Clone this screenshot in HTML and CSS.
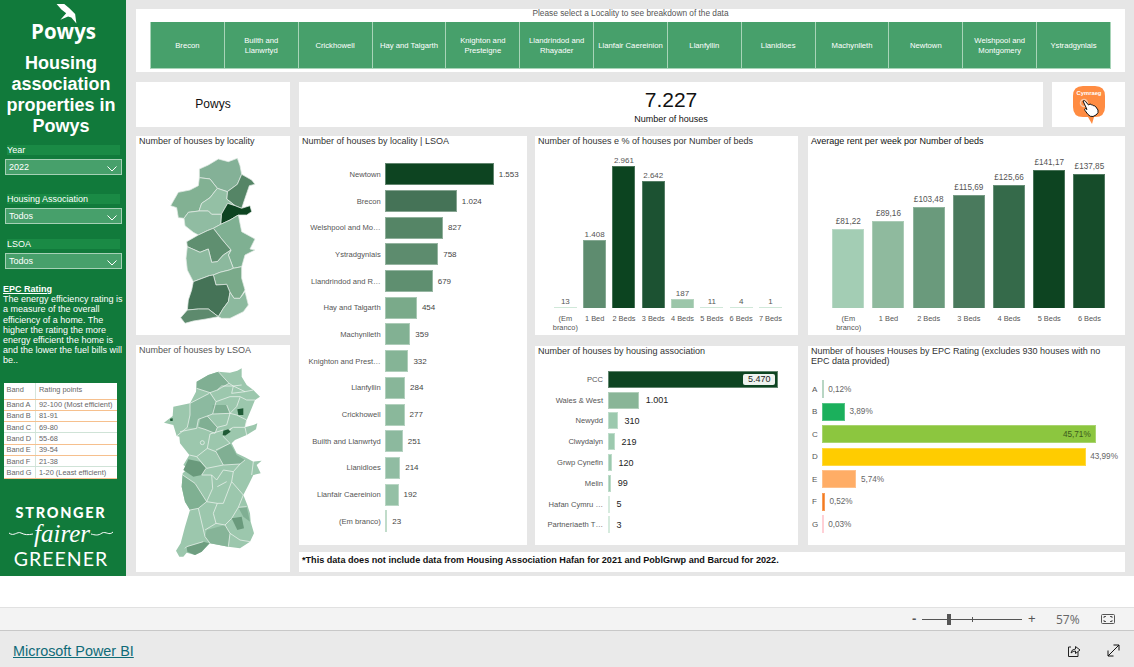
FILE: index.html
```html
<!DOCTYPE html>
<html lang="en">
<head>
<meta charset="utf-8">
<title>Housing association properties in Powys</title>
<link rel="stylesheet" href="styles.css">
</head>
<body>
<div class="report">
  <aside class="sidebar">
    <div class="logo">
      <svg class="bird" viewBox="155 8 72 68" width="23" height="22"><path fill="#fff" d="M160 11 L184 11 L200 24 L218 42 L222 72 L206 53 L196 50 L172 60 L190 40 L175 28 Z"/></svg>
      <div class="logo-text">Powys</div>
    </div>
    <h1 class="heading">Housing association properties in Powys</h1>
    <div class="slicer slicer-year">
      <div class="slicer-label">Year</div>
      <div class="dropdown"><span>2022</span><svg width="10" height="6" viewBox="0 0 10 6"><polyline points="0.5,0.5 5,5 9.5,0.5" fill="none" stroke="#fff"/></svg></div>
    </div>
    <div class="slicer slicer-ha">
      <div class="slicer-label">Housing Association</div>
      <div class="dropdown"><span>Todos</span><svg width="10" height="6" viewBox="0 0 10 6"><polyline points="0.5,0.5 5,5 9.5,0.5" fill="none" stroke="#fff"/></svg></div>
    </div>
    <div class="slicer slicer-lsoa">
      <div class="slicer-label">LSOA</div>
      <div class="dropdown"><span>Todos</span><svg width="10" height="6" viewBox="0 0 10 6"><polyline points="0.5,0.5 5,5 9.5,0.5" fill="none" stroke="#fff"/></svg></div>
    </div>
    <div class="epc-text">
      <div class="epc-title">EPC Rating</div>
      <p>The energy efficiency rating is a measure of the overall efficiency of a home. The higher the rating the more energy efficient the home is and the lower the fuel bills will be..</p>
    </div>
    <table class="bands">
      <tr class="band-head"><td>Band</td><td>Rating points</td></tr>
      <tr class="o"><td>Band A</td><td>92-100 (Most efficient)</td></tr>
      <tr class="o"><td>Band B</td><td>81-91</td></tr>
      <tr class="g"><td>Band C</td><td>69-80</td></tr>
      <tr class="o"><td>Band D</td><td>55-68</td></tr>
      <tr class="o"><td>Band E</td><td>39-54</td></tr>
      <tr class="g"><td>Band F</td><td>21-38</td></tr>
      <tr class="o"><td>Band G</td><td>1-20 (Least efficient)</td></tr>
    </table>
    <div class="slogan">
      <div class="stronger">STRONGER</div>
      <div class="fairer">
        <svg width="24" height="8" viewBox="0 0 24 8"><path d="M0 3 C5 7 8 1 12 3 C16 5 19 5 24 4" fill="none" stroke="#fff" stroke-width="1"/></svg>
        <span>fairer</span>
        <svg width="22" height="8" viewBox="0 0 22 8"><path d="M0 4 C4 5 7 6 11 3 C15 1 18 6 22 2" fill="none" stroke="#fff" stroke-width="1"/></svg>
      </div>
      <div class="greener">GREENER</div>
    </div>
  </aside>

  <main class="main">
    <section class="tile top-tile">
      <div class="top-caption">Please select a Locality to see breakdown of the data</div>
      <div class="locality-buttons">
        <button class="loc">Brecon</button>
        <button class="loc">Builth and Llanwrtyd</button>
        <button class="loc">Crickhowell</button>
        <button class="loc">Hay and Talgarth</button>
        <button class="loc">Knighton and Presteigne</button>
        <button class="loc">Llandrindod and Rhayader</button>
        <button class="loc">Llanfair Caereinion</button>
        <button class="loc">Llanfyllin</button>
        <button class="loc">Llanidloes</button>
        <button class="loc">Machynlleth</button>
        <button class="loc">Newtown</button>
        <button class="loc">Welshpool and Montgomery</button>
        <button class="loc">Ystradgynlais</button>
      </div>
    </section>

    <section class="kpi-row">
      <div class="tile place">Powys</div>
      <div class="tile kpi">
        <div class="kpi-value">7.227</div>
        <div class="kpi-label">Number of houses</div>
      </div>
      <div class="tile lang">
        <svg width="34" height="40" viewBox="0 0 34 40">
          <path fill="#ff8c42" d="M11 0 H23 Q33 0 33 10 V21 Q33 31 23 31 H22 L20 38 L16 31 H11 Q1 31 1 21 V10 Q1 0 11 0 Z"/>
          <text x="17" y="9" class="lang-text" text-anchor="middle">Cymraeg</text>
          <circle cx="12" cy="17" r="3.5" fill="none" stroke="#f6c9a8" stroke-width="1.5"/>
          <path transform="translate(-3,-1)" fill="#fff" stroke="#111" stroke-width="1" d="M14 16 Q15.5 15 16.5 16.5 L19.5 20 L21 19 Q22 19 22.5 20 Q24 19.5 24.5 20.8 Q26 20.5 26.8 21.8 L29 25 Q30 28 27 30 L24 31.5 Q21 32 19 29.5 L16 25.5 Q15 24 16.5 23.5 L18 24.5 Z"/>
        </svg>
      </div>
    </section>

    <section class="lower">
      <div class="maps">
        <div class="tile map-a">
          <div class="title">Number of houses by locality</div>
          <svg class="map" width="154" height="187" viewBox="18 39 462 561">
            <g stroke="#e2ebe5" stroke-width="2.2" stroke-linejoin="round">
              <polygon fill="#84b197" points="208,102 235,90 265,72 295,80 322,70 330,92 335,118 322,148 292,170 262,160 240,132 208,128"/>
              <polygon fill="#82b193" points="208,128 240,132 262,160 240,188 215,205 207,228 175,232 162,250 145,248 140,218 122,212 145,172 180,165 205,152"/>
              <polygon fill="#558566" points="335,118 365,135 375,148 358,152 345,190 335,220 315,212 290,192 292,170 322,148"/>
              <polygon fill="#94c0a5" points="262,160 292,170 290,192 315,212 293,205 274,238 245,238 235,228 207,228 215,205 240,188"/>
              <polygon fill="#0d4421" points="293,205 315,212 335,220 360,212 365,230 350,240 325,240 300,255 272,268 274,238"/>
              <polygon fill="#90bca2" points="175,232 207,228 235,228 245,238 274,238 272,268 250,280 232,287 205,300 190,292 165,272 162,250"/>
              <polygon fill="#7fb092" points="272,268 300,255 325,240 335,290 375,312 360,342 375,345 345,360 335,395 310,400 295,360 303,345 275,312 250,280"/>
              <polygon fill="#5f8f70" points="205,300 232,287 250,280 275,312 303,345 280,360 262,380 245,382 235,342 210,352 172,335 170,320"/>
              <polygon fill="#8cb99e" points="172,335 210,352 235,342 245,382 262,380 280,360 303,345 295,360 310,400 298,405 270,412 250,420 238,422 190,440 172,405 168,370"/>
              <polygon fill="#7aaa8a" points="298,405 310,400 335,395 335,430 345,465 330,490 312,490 300,472 290,448 258,450 250,420 270,412"/>
              <polygon fill="#457357" points="238,422 250,420 258,450 290,448 300,472 295,500 280,520 265,545 235,522 205,522 172,525 175,495 185,465 190,440"/>
              <polygon fill="#8cb99e" points="300,472 312,490 330,490 345,470 355,510 340,530 300,550 275,550 265,545 280,520 295,500"/>
              <polygon fill="#5d8a6d" points="172,525 205,522 235,522 265,545 228,552 190,558 165,565 152,548"/>
            </g>
          </svg>
        </div>
        <div class="tile map-b">
          <div class="title title-muted">Number of houses by LSOA</div>
          <svg class="map" width="154" height="215" viewBox="18 51 462 645">
            <polygon fill="#9cc7ad" points="265,95 300,98 322,92 335,85 335,110 350,135 370,150 390,170 375,180 365,205 350,240 345,262 370,255 382,250 378,268 350,285 315,300 305,310 320,340 345,352 370,365 395,362 380,375 392,400 370,405 358,430 340,465 352,495 360,520 362,545 372,580 360,605 330,625 295,620 240,610 215,635 195,645 170,638 160,650 148,650 138,632 152,610 165,560 180,510 165,485 155,440 158,400 175,385 160,375 178,345 150,310 148,290 140,288 130,255 102,248 128,228 130,200 180,190 198,155 200,125 235,105"/>
            <polygon fill="#80af93" points="200,125 235,105 265,95 297,130 262,150 240,158 200,145"/>
            <polygon fill="#8cbaa0" points="180,190 238,160 258,185 248,222 205,238 200,265 172,262 180,225"/>
            <polygon fill="#80af93" points="205,262 212,235 232,228 262,262 255,280 225,268"/>
            <polygon fill="#80af93" points="248,195 290,195 300,220 248,222"/>
            <polygon fill="#80af93" points="258,335 300,310 320,345 345,360 330,372 280,375 262,345"/>
            <polygon fill="#6a9a7c" points="175,358 210,365 228,385 215,405 190,410 160,390"/>
            <polygon fill="#7fb092" points="158,405 195,430 230,485 205,505 180,510 165,485 155,440"/>
            <polygon fill="#86b498" points="230,570 285,555 300,580 295,620 240,610 225,590"/>
            <polygon fill="#6e9e80" points="170,620 220,605 238,610 215,635 195,645 172,635"/>
            <polygon fill="#6a9a7c" points="305,535 335,530 342,565 322,570"/>
            <polygon fill="#80af93" points="325,502 350,500 360,545 340,530"/>
            <g fill="none" stroke="#eef4f0" stroke-width="2.2" stroke-linejoin="round">
              <polyline points="200,145 240,158 262,150 297,130 265,95"/>
              <polyline points="262,150 275,138 310,138 345,155 370,150"/>
              <polyline points="297,130 310,138 335,135"/>
              <polyline points="310,138 305,160 345,155"/>
              <polyline points="240,158 258,185 300,170 330,170 350,180 375,180"/>
              <polyline points="180,190 180,225 172,262 140,288"/>
              <polyline points="238,160 180,190"/>
              <polyline points="258,185 248,222 205,238 200,265 150,275"/>
              <polyline points="248,222 300,220 320,200 330,172"/>
              <polyline points="232,228 262,262 255,280 225,268 205,262"/>
              <polyline points="290,195 300,220 290,255 262,262"/>
              <polyline points="300,220 320,225 350,240 345,262 310,262 295,270"/>
              <polyline points="240,282 232,325 200,350 178,345"/>
              <polyline points="240,282 280,270"/>
              <polyline points="258,330 300,310 280,290 305,265"/>
              <polyline points="232,325 258,335 280,375 330,372 345,360"/>
              <polyline points="200,350 230,385 280,375"/>
              <polyline points="228,385 215,405 245,405 260,420 280,390 310,395 330,372"/>
              <polyline points="310,395 305,425 340,465"/>
              <polyline points="158,405 195,430 230,485 205,505 180,510"/>
              <polyline points="245,405 248,445 230,485 262,490 280,490 305,425"/>
              <polyline points="262,440 290,425"/>
              <polyline points="205,505 225,590 240,610"/>
              <polyline points="262,490 250,520 258,550 285,555 305,535 325,502 340,465"/>
              <polyline points="225,570 258,550"/>
              <polyline points="285,555 300,580 295,620"/>
              <polyline points="300,580 330,600 360,605"/>
              <polyline points="350,500 325,502"/>
              <polyline points="165,625 170,620 220,605"/>
              <polyline points="345,262 350,285"/>
              <polyline points="370,365 365,405"/>
              <circle cx="217" cy="308" r="6"/>
            </g>
            <polygon fill="#1f5a36" points="322,208 340,205 340,225 325,225"/>
            <polygon fill="#1f5a36" points="280,272 295,268 302,275 285,287 278,285"/>
            <polygon fill="#1f5a36" points="120,236 128,235 128,243 121,243"/>
          </svg>
        </div>
      </div>

      <div class="right">
        <div class="charts">
          <div class="tile locality">
            <div class="title">Number of houses by locality | LSOA</div>
            <div class="hchart">
              <div class="hrow"><span class="hlabel">Newtown</span><span class="hbar" style="width:108.5px;background:#0d4421"></span><span class="hval">1.553</span></div>
              <div class="hrow"><span class="hlabel">Brecon</span><span class="hbar" style="width:71.6px;background:#457357"></span><span class="hval">1.024</span></div>
              <div class="hrow"><span class="hlabel">Welshpool and Mo…</span><span class="hbar" style="width:57.8px;background:#558566"></span><span class="hval">827</span></div>
              <div class="hrow"><span class="hlabel">Ystradgynlais</span><span class="hbar" style="width:53px;background:#5d8c6e"></span><span class="hval">758</span></div>
              <div class="hrow"><span class="hlabel">Llandrindod and R…</span><span class="hbar" style="width:47.5px;background:#5f8f70"></span><span class="hval">679</span></div>
              <div class="hrow"><span class="hlabel">Hay and Talgarth</span><span class="hbar" style="width:31.7px;background:#7aaa8a"></span><span class="hval">454</span></div>
              <div class="hrow"><span class="hlabel">Machynlleth</span><span class="hbar" style="width:25.1px;background:#82b193"></span><span class="hval">359</span></div>
              <div class="hrow"><span class="hlabel">Knighton and Prest…</span><span class="hbar" style="width:23.2px;background:#85b496"></span><span class="hval">332</span></div>
              <div class="hrow"><span class="hlabel">Llanfyllin</span><span class="hbar" style="width:19.9px;background:#88b699"></span><span class="hval">284</span></div>
              <div class="hrow"><span class="hlabel">Crickhowell</span><span class="hbar" style="width:19.4px;background:#8ab89b"></span><span class="hval">277</span></div>
              <div class="hrow"><span class="hlabel">Builth and Llanwrtyd</span><span class="hbar" style="width:17.5px;background:#8cb99e"></span><span class="hval">251</span></div>
              <div class="hrow"><span class="hlabel">Llanidloes</span><span class="hbar" style="width:15px;background:#90bca2"></span><span class="hval">214</span></div>
              <div class="hrow"><span class="hlabel">Llanfair Caereinion</span><span class="hbar" style="width:13.4px;background:#94c0a5"></span><span class="hval">192</span></div>
              <div class="hrow"><span class="hlabel">(Em branco)</span><span class="hbar" style="width:1.6px;background:#a0c9ae"></span><span class="hval">23</span></div>
            </div>
          </div>

          <div class="stack stack-mid">
            <div class="tile chart-tile">
              <div class="title">Number of houses e % of houses por Number of beds</div>
              <div class="vplot beds">
                <div class="vcol"><span class="vval">13</span><span class="vbar" style="height:1px;background:#c0e0cc"></span></div>
                <div class="vcol"><span class="vval">1.408</span><span class="vbar" style="height:68px;background:#5e8c6f"></span></div>
                <div class="vcol"><span class="vval">2.961</span><span class="vbar" style="height:142px;background:#0c4420"></span></div>
                <div class="vcol"><span class="vval">2.642</span><span class="vbar" style="height:127px;background:#1c5232"></span></div>
                <div class="vcol"><span class="vval">187</span><span class="vbar" style="height:9px;background:#9cc6aa"></span></div>
                <div class="vcol"><span class="vval">11</span><span class="vbar" style="height:1px;background:#c0e0cc"></span></div>
                <div class="vcol"><span class="vval">4</span><span class="vbar" style="height:1px;background:#c0e0cc"></span></div>
                <div class="vcol"><span class="vval">1</span><span class="vbar" style="height:1px;background:#c0e0cc"></span></div>
              </div>
              <div class="vcats beds">
                <span>(Em branco)</span><span>1 Bed</span><span>2 Beds</span><span>3 Beds</span><span>4 Beds</span><span>5 Beds</span><span>6 Beds</span><span>7 Beds</span>
              </div>
            </div>
            <div class="tile chart-tile">
              <div class="title">Number of houses by housing association</div>
              <div class="hchart ha">
                <div class="hrow"><span class="hlabel">PCC</span><span class="hbar" style="width:170.7px;background:#0d4421"><span class="pill">5.470</span></span></div>
                <div class="hrow"><span class="hlabel">Wales &amp; West</span><span class="hbar" style="width:31.3px;background:#89b597"></span><span class="hval">1.001</span></div>
                <div class="hrow"><span class="hlabel">Newydd</span><span class="hbar" style="width:10px;background:#9cc9ae"></span><span class="hval">310</span></div>
                <div class="hrow"><span class="hlabel">Clwydalyn</span><span class="hbar" style="width:7px;background:#9cc9ae"></span><span class="hval">219</span></div>
                <div class="hrow"><span class="hlabel">Grwp Cynefin</span><span class="hbar" style="width:4px;background:#9cc9ae"></span><span class="hval">120</span></div>
                <div class="hrow"><span class="hlabel">Melin</span><span class="hbar" style="width:3.2px;background:#9cc9ae"></span><span class="hval">99</span></div>
                <div class="hrow"><span class="hlabel">Hafan Cymru …</span><span class="hbar" style="width:1px;background:#c0e0cc"></span><span class="hval">5</span></div>
                <div class="hrow"><span class="hlabel">Partneriaeth T…</span><span class="hbar" style="width:1px;background:#c0e0cc"></span><span class="hval">3</span></div>
              </div>
            </div>
          </div>

          <div class="stack stack-right">
            <div class="tile chart-tile">
              <div class="title title-dark">Average rent per week por Number of beds</div>
              <div class="vplot rent">
                <div class="vcol"><span class="vval">£81,22</span><span class="vbar" style="height:79px;background:#a3cdb4"></span></div>
                <div class="vcol"><span class="vval">£89,16</span><span class="vbar" style="height:87px;background:#8fba9e"></span></div>
                <div class="vcol"><span class="vval">£103,48</span><span class="vbar" style="height:101px;background:#6a9a7c"></span></div>
                <div class="vcol"><span class="vval">£115,69</span><span class="vbar" style="height:113px;background:#4a7a5d"></span></div>
                <div class="vcol"><span class="vval">£125,66</span><span class="vbar" style="height:123px;background:#356a4a"></span></div>
                <div class="vcol"><span class="vval">£141,17</span><span class="vbar" style="height:138px;background:#0d4421"></span></div>
                <div class="vcol"><span class="vval">£137,85</span><span class="vbar" style="height:134px;background:#164c2a"></span></div>
              </div>
              <div class="vcats rent">
                <span>(Em branco)</span><span>1 Bed</span><span>2 Beds</span><span>3 Beds</span><span>4 Beds</span><span>5 Beds</span><span>6 Beds</span>
              </div>
            </div>
            <div class="tile chart-tile">
              <div class="title title-two">Number of houses Houses by EPC Rating (excludes 930 houses with no EPC data provided)</div>
              <div class="epc">
                <div class="erow"><span class="elabel">A</span><span class="ebar" style="width:1px;background:#a0c9b0"></span><span class="eval">0,12%</span></div>
                <div class="erow"><span class="elabel">B</span><span class="ebar" style="width:23.3px;background:#1bb05c"></span><span class="eval">3,89%</span></div>
                <div class="erow"><span class="elabel">C</span><span class="ebar" style="width:274px;background:#8cc63f"><span class="eval-in">45,71%</span></span></div>
                <div class="erow"><span class="elabel">D</span><span class="ebar" style="width:264px;background:#ffcc00"></span><span class="eval">43,99%</span></div>
                <div class="erow"><span class="elabel">E</span><span class="ebar" style="width:34.7px;background:#ffad66"></span><span class="eval">5,74%</span></div>
                <div class="erow"><span class="elabel">F</span><span class="ebar" style="width:3.2px;background:#f47b20"></span><span class="eval">0,52%</span></div>
                <div class="erow"><span class="elabel">G</span><span class="ebar" style="width:1px;background:#ffc0c8"></span><span class="eval">0,03%</span></div>
              </div>
            </div>
          </div>
        </div>
        <div class="tile footnote">*This data does not include data from Housing Association Hafan for 2021 and PoblGrwp and Barcud for 2022.</div>
      </div>
    </section>
  </main>
</div>

<div class="gap-strip"></div>

<div class="zoombar">
  <span class="zoom-minus">-</span>
  <div class="slider"><span class="slider-thumb"></span><span class="slider-tick"></span></div>
  <span class="zoom-plus">+</span>
  <span class="zoom-pct">57%</span>
  <svg class="fit" width="14" height="10" viewBox="0 0 14 10"><rect x="0.5" y="0.5" width="13" height="9" rx="1" fill="none" stroke="#555"/><path d="M3 4 V2.5 H5 M9 2.5 H11 V4 M11 6 V7.5 H9 M5 7.5 H3 V6" fill="none" stroke="#555"/></svg>
</div>

<footer class="footer">
  <a class="brand" href="#">Microsoft Power BI</a>
  <div class="footer-icons">
    <svg width="14" height="14" viewBox="0 0 14 14"><path d="M4 3 H1.5 V12.5 H11 V8" fill="none" stroke="#222"/><path d="M4 9 Q4.5 5 8.5 5 V2.5 L13 6 L8.5 9.5 V7 Q6 7 4 9 Z" fill="none" stroke="#222"/></svg>
    <svg width="13" height="13" viewBox="0 0 13 13"><path d="M1 12 L12 1 M6.5 1 H12 V6.5 M1 6.5 V12 H6.5" fill="none" stroke="#111"/></svg>
  </div>
</footer>
</body>
</html>
```
FILE: styles.css
```css
* { box-sizing: border-box; }
html, body { margin: 0; padding: 0; }
body {
  width: 1134px;
  height: 667px;
  overflow: hidden;
  background: #fff;
  font-family: "Liberation Sans", Arial, sans-serif;
  color: #333;
}
.report { display: flex; height: 576px; background: #e6e6e6; }

/* Sidebar */
.sidebar { width: 126px; flex: none; background: #117a3b; color: #fff; display: flex; flex-direction: column; }
.logo { display: flex; flex-direction: column; align-items: center; padding-top: 3px; height: 42px; }
.bird { display: block; margin-left: 6px; flex: none; }
.logo-text { font-family: "Open Sans", sans-serif; font-weight: 700; font-size: 20.5px; line-height: 19px; margin-left: 1px; margin-top: -3px; }
.heading { margin: 11px 0 0; width: 122px; font-size: 18px; font-weight: 700; line-height: 21px; text-align: center; }
.slicer-label { margin-left: 7px; width: 113px; height: 10px; background: #1a8a45; font-size: 9px; line-height: 10px; }
.dropdown { margin: 4px 0 0 5px; width: 117px; height: 16px; padding: 0 4px 0 3px; background: #47a06b; border: 1px solid #a6d1b6; display: flex; align-items: center; justify-content: space-between; font-size: 9px; }
.dropdown svg { margin-top: 3px; }
.slicer-year { margin-top: 8px; }
.slicer-ha { margin-top: 19px; }
.slicer-lsoa { margin-top: 15px; }
.epc-text { margin-top: 15px; padding-left: 3px; font-size: 9px; line-height: 10.2px; }
.epc-title { text-decoration: underline; font-weight: 700; }
.epc-text p { margin: 0; width: 122px; }
.bands { margin: 17px 0 0 3.5px; width: 113px; height: 96px; flex: none; border-collapse: collapse; background: #fff; color: #666; font-size: 7.4px; table-layout: fixed; }
.bands td { padding: 0 0 0 3px; line-height: 9px; border-left: 1px solid #d5e6dc; white-space: nowrap; }
.bands td:first-child { width: 32px; border-left: 0; }
.band-head { height: 16px; }
.band-head td { vertical-align: top; padding-top: 2px; border-bottom: 1px solid #f6c08e; }
.bands tr.o td { height: 11px; border-bottom: 1px solid #f6c08e; }
.bands tr.g td { height: 11px; border-bottom: 1px solid #cfe3d7; }
.slogan { margin-top: 27px; display: flex; flex-direction: column; align-items: center; width: 122px; }
.stronger { font-family: Lato, sans-serif; font-weight: 900; font-size: 14.5px; line-height: 14px; letter-spacing: 1.7px; }
.fairer { display: flex; align-items: center; gap: 1px; height: 29px; }
.fairer span { font-family: "Liberation Serif", serif; font-style: italic; font-size: 25px; line-height: 24px; }
.greener { font-family: Lato, sans-serif; font-weight: 400; font-size: 19.5px; line-height: 20px; letter-spacing: 1px; }

/* Main */
.main { width: 1008px; padding: 9px 9px 0 10px; display: flex; flex-direction: column; }
.tile { background: #fff; }
.top-tile { height: 63px; display: flex; flex-direction: column; align-items: center; }
.top-caption { font-size: 8.3px; line-height: 9px; color: #555; height: 13px; }
.locality-buttons { display: flex; width: 961px; height: 47px; }
.loc { flex: 1 1 0; min-width: 0; padding: 1px 3px 0; background: #47a06b; border: 1px solid #a8d4b8; border-width: 0 1px 1px 0; color: #fff; font-family: inherit; font-size: 7.7px; line-height: 10px; text-align: center; }
.loc:first-child { border-left-width: 1px; }

.kpi-row { margin-top: 10px; display: grid; grid-template-columns: 154px 744px 73px; column-gap: 9px; height: 45px; }
.place { display: flex; align-items: center; justify-content: center; padding-bottom: 2px; font-size: 12px; color: #111; }
.kpi { display: flex; flex-direction: column; align-items: center; padding-top: 7px; color: #111; }
.kpi-value { font-size: 21px; line-height: 22px; }
.kpi-label { font-size: 9px; line-height: 11px; margin-top: 2.5px; }
.lang { display: flex; align-items: flex-start; justify-content: center; padding-top: 4px; }
.lang-text { fill: #fff; font-size: 5.8px; font-weight: 700; font-family: "Liberation Sans", sans-serif; }

.lower { margin-top: 9px; display: flex; gap: 9px; }
.maps { width: 154px; display: flex; flex-direction: column; gap: 10px; flex: none; }
.map-a { height: 199px; }
.map-b { height: 227px; }
.map { display: block; }
.title { height: 12px; padding-left: 3px; font-size: 9px; line-height: 11px; color: #333; white-space: nowrap; }
.title-muted { color: #555; }
.title-dark { color: #111; }
.title-two { height: 22px; white-space: normal; line-height: 10.3px; padding-right: 20px; }

.right { width: 826px; display: flex; flex-direction: column; }
.charts { display: flex; height: 409px; }
.locality { width: 228px; }
.stack { display: flex; flex-direction: column; gap: 11px; }
.stack-mid { width: 263px; margin-left: 8px; }
.stack-right { width: 317px; margin-left: 10px; }
.chart-tile { height: 199px; }
.footnote { margin-top: 7px; height: 20px; padding-left: 3px; font-size: 9.1px; line-height: 17px; font-weight: 700; color: #111; white-space: nowrap; }

/* Horizontal bars */
.hchart { margin-top: 13px; }
.hrow { display: flex; align-items: center; height: 26.7px; }
.hlabel { width: 81.7px; flex: none; text-align: right; font-size: 7.6px; color: #555; white-space: nowrap; }
.hbar { height: 22px; margin-left: 4.5px; border: 1px solid rgba(255,255,255,.35); flex: none; display: flex; align-items: center; justify-content: flex-end; }
.hval { margin-left: 5px; font-size: 8px; color: #444; }
.ha { margin-top: 11px; }
.ha .hrow { height: 20.8px; }
.ha .hlabel { width: 68px; }
.ha .hbar { height: 17px; }
.ha .hval { margin-left: 7px; font-size: 9px; color: #222; }
.pill { width: 32px; height: 11px; margin-right: 2px; background: #eef3ef; border-radius: 2px; color: #222; font-size: 9px; line-height: 11px; text-align: center; }

/* Vertical bars */
.vplot { height: 160px; display: flex; align-items: flex-end; }
.vcol { display: flex; flex-direction: column; align-items: center; flex: none; }
.vval { font-size: 8px; line-height: 11px; color: #555; white-space: nowrap; }
.vbar { display: block; border: 1px solid rgba(255,255,255,.25); border-bottom-width: 0; }
.vcats { display: flex; margin-top: 5.5px; }
.vcats span { flex: none; text-align: center; font-size: 7.4px; line-height: 9px; color: #555; }
.beds { padding-left: 15.7px; }
.beds .vcol, .vcats.beds span { width: 29.3px; }
.beds .vbar { width: 23px; }
.rent { padding-left: 20.2px; }
.rent .vcol, .vcats.rent span { width: 40.2px; }
.rent .vbar { width: 32px; }
.rent .vval { font-size: 8.2px; margin-bottom: 2px; }
.vcats.rent span { padding: 0 8px; }
.vcats.beds span { padding: 0 1px; }

/* EPC */
.epc { margin-top: 10px; }
.erow { display: flex; align-items: center; height: 22.5px; }
.elabel { width: 13.7px; flex: none; padding-left: 4px; font-size: 8px; color: #555; }
.ebar { height: 18px; flex: none; display: flex; align-items: center; justify-content: flex-end; border: 1px solid rgba(255,255,255,.25); }
.eval { margin-left: 4.5px; font-size: 8.2px; color: #666; }
.eval-in { margin-right: 4px; font-size: 8.2px; color: #3d5a1c; }

/* Bottom chrome */
.gap-strip { height: 31px; background: #fff; }
.zoombar { height: 24px; display: flex; align-items: center; background: #f3f3f3; border-top: 1px solid #e1e1e1; border-bottom: 1px solid #c8c8c8; color: #555; padding-left: 912px; }
.zoom-minus { width: 10px; font-size: 13px; font-weight: 700; line-height: 20px; }
.slider { width: 100px; height: 1px; background: #555; position: relative; }
.slider-thumb { position: absolute; left: 25px; top: -5px; width: 4px; height: 11px; background: #555; }
.slider-tick { position: absolute; left: 50px; top: -2px; width: 1px; height: 5px; background: #555; }
.zoom-plus { margin-left: 6px; width: 12px; font-size: 13px; line-height: 20px; }
.zoom-pct { margin-left: 16px; font-family: "Open Sans", sans-serif; font-size: 12px; width: 23px; white-space: nowrap; color: #666; }
.fit { margin-left: 22px; }
.footer { height: 36px; background: #eaeaea; display: flex; align-items: center; justify-content: space-between; padding: 3px 14px 0 13px; }
.brand { font-size: 14.4px; color: #0f6b78; text-decoration: underline; }
.footer-icons { display: flex; gap: 26px; align-items: center; }
```
